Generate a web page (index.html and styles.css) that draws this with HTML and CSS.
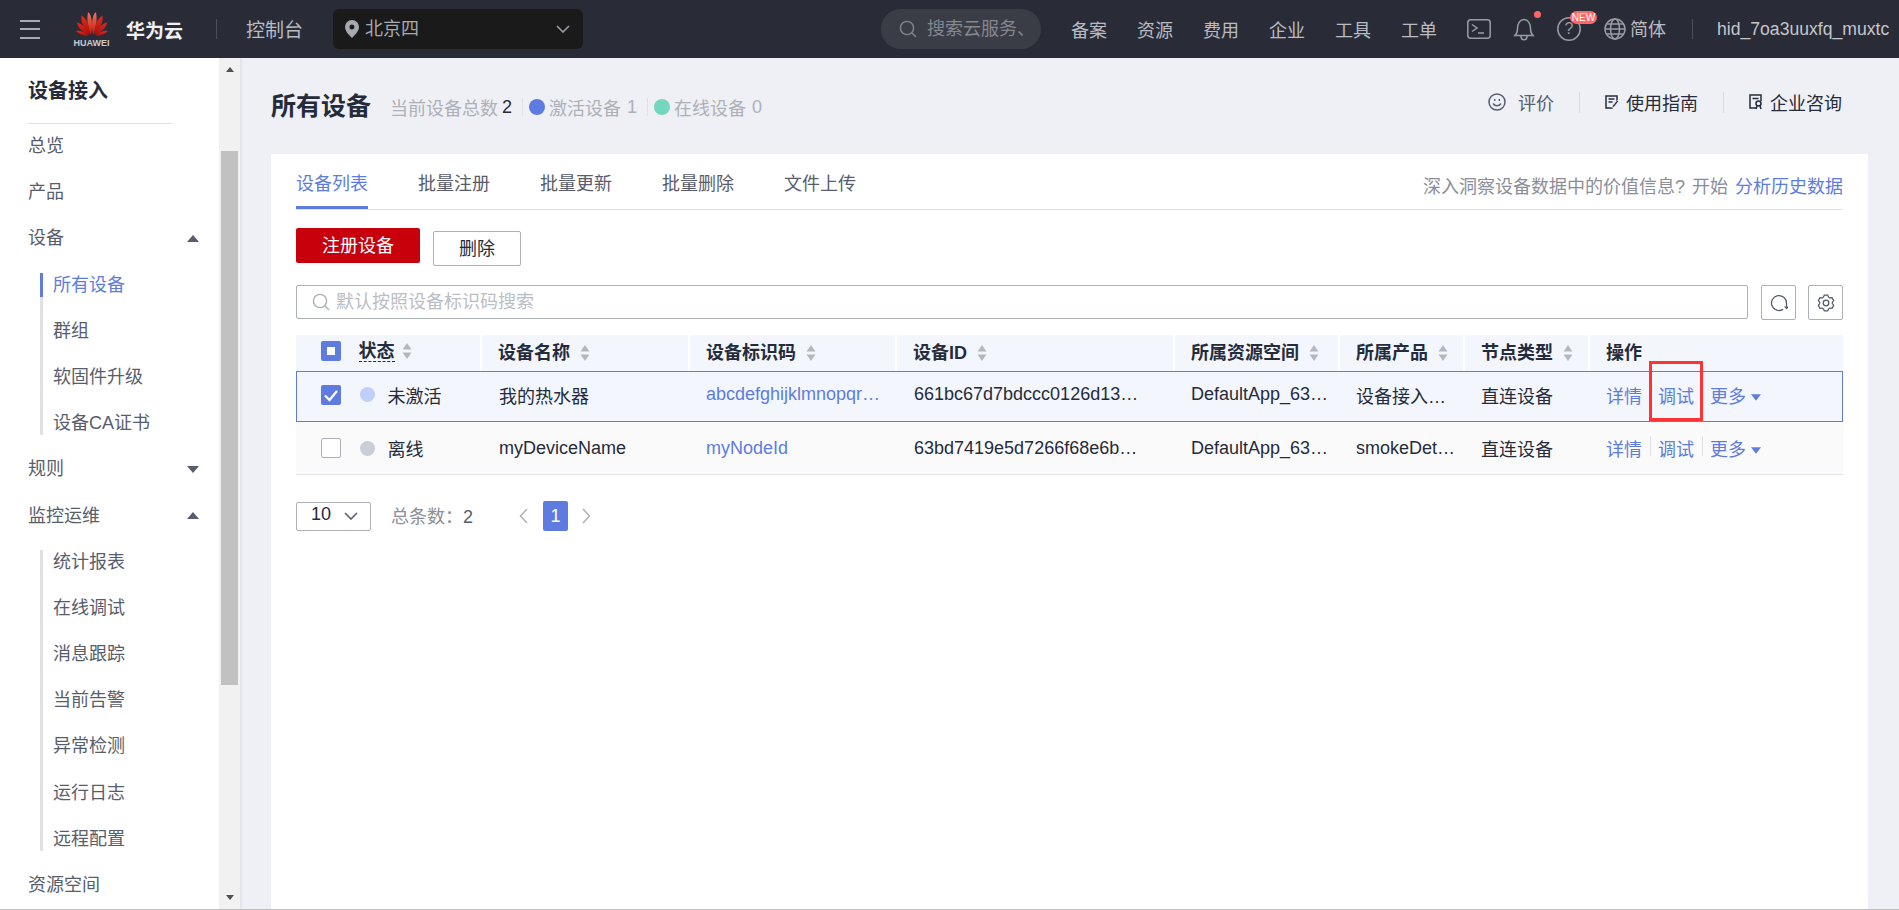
FILE: index.html
```html
<!DOCTYPE html>
<html lang="zh-CN">
<head>
<meta charset="utf-8">
<title>所有设备</title>
<link rel="stylesheet" href="styles.css">
</head>
<body>
<svg class="defs" width="0" height="0" aria-hidden="true">
  <defs>
    <linearGradient id="petal" x1="0" y1="0" x2="0" y2="1">
      <stop offset="0" stop-color="#f0775a"/>
      <stop offset="1" stop-color="#c8150f"/>
    </linearGradient>
    <linearGradient id="petalLow" x1="0" y1="0" x2="0" y2="1">
      <stop offset="0" stop-color="#e62a1c"/>
      <stop offset="1" stop-color="#a30f0d"/>
    </linearGradient>
    <symbol id="sort" viewBox="0 0 10 18">
      <path d="M5 1 9.5 7.5H.5Z"/>
      <path d="M.5 10.5h9L5 17Z"/>
    </symbol>
    <symbol id="caret" viewBox="0 0 12 8">
      <path d="M0 0h12L6 8Z"/>
    </symbol>
    <symbol id="search" viewBox="0 0 18 18">
      <circle cx="8" cy="8" r="6.6" fill="none" stroke="currentColor" stroke-width="1.4"/>
      <path d="M12.8 12.8 17 17" fill="none" stroke="currentColor" stroke-width="1.4"/>
    </symbol>
    <symbol id="chev" viewBox="0 0 14 8">
      <path d="M1 1l6 6 6-6" fill="none" stroke="currentColor" stroke-width="1.6"/>
    </symbol>
  </defs>
</svg>

<header class="topbar">
  <button class="menu-btn" aria-label="菜单"><span></span><span></span><span></span></button>
  <div class="brand">
    <div class="brand-mark">
      <svg class="logo-svg" viewBox="0 0 32 24" width="32" height="24" aria-hidden="true">
        <g fill="url(#petal)">
          <path d="M14.9 23 C11.5 15 10.5 6 12.2 0 C16 3 17 14 14.9 23Z"/>
          <path d="M17.1 23 C20.5 15 21.5 6 19.8 0 C16 3 15 14 17.1 23Z"/>
        </g>
        <g fill="url(#petalLow)">
          <path d="M13.6 23 C8 17 4.5 10 5.5 3.5 C10 6 14.5 14 13.6 23Z"/>
          <path d="M18.4 23 C24 17 27.5 10 26.5 3.5 C22 6 17.5 14 18.4 23Z"/>
          <path d="M12.6 23.3 C7 20.5 2.5 16.5 .8 10.5 C5.5 11.5 11.5 17 12.6 23.3Z"/>
          <path d="M19.4 23.3 C25 20.5 29.5 16.5 31.2 10.5 C26.5 11.5 20.5 17 19.4 23.3Z"/>
          <path d="M12 24 C8 24 3 22.5 0 18.8 C4.5 18.6 9.5 20.5 12 24Z"/>
          <path d="M20 24 C24 24 29 22.5 32 18.8 C27.5 18.6 22.5 20.5 20 24Z"/>
        </g>
      </svg>
      <span class="logo-text">HUAWEI</span>
    </div>
    <span class="brand-name">华为云</span>
  </div>
  <span class="bar-sep bar-sep-brand"></span>
  <span class="console">控制台</span>
  <div class="region">
    <svg class="pin" viewBox="0 0 14 18" width="14" height="18" aria-hidden="true">
      <path fill-rule="evenodd" d="M7 0a7 7 0 0 1 7 7c0 4-4 8-7 11-3-3-7-7-7-11a7 7 0 0 1 7-7Zm0 4.500a2.500 2.500 0 1 0 0 5 2.500 2.500 0 0 0 0-5Z"/>
    </svg>
    <span class="region-name">北京四</span>
    <svg class="region-chev"><use href="#chev"/></svg>
  </div>
  <div class="top-search">
    <svg class="top-search-icon"><use href="#search"/></svg>
    <span>搜索云服务、</span>
  </div>
  <nav class="top-nav">
    <a>备案</a><a>资源</a><a>费用</a><a>企业</a><a>工具</a><a>工单</a>
  </nav>
  <svg class="ico ico-term" viewBox="0 0 24 20" width="24" height="20" aria-hidden="true">
    <rect x=".8" y=".8" width="22.4" height="18.4" rx="3"/>
    <path d="M5 5.500 10 9 5 12.500M11 14h6"/>
  </svg>
  <div class="ico-wrap ico-wrap-bell">
    <svg class="ico" viewBox="0 0 22 24" width="22" height="24" aria-hidden="true">
      <path d="M2 18.500c2-2 2.500-3.500 2.500-7 0-5 2.500-9 6.500-9s6.500 4 6.500 9c0 3.500.5 5 2.500 7ZM8 19c0 5 6 5 6 0"/>
    </svg>
    <span class="dot-red"></span>
  </div>
  <div class="ico-wrap ico-wrap-help">
    <svg class="ico" viewBox="0 0 24 24" width="24" height="24" aria-hidden="true">
      <circle cx="12" cy="12" r="11.200"/>
    </svg>
    <span class="help-q">?</span>
    <span class="badge-new">NEW</span>
  </div>
  <svg class="ico ico-globe" viewBox="0 0 22 22" width="22" height="22" aria-hidden="true">
    <circle cx="11" cy="11" r="10"/>
    <ellipse cx="11" cy="11" rx="4.500" ry="10"/>
    <path d="M1 11h20M2.500 6h17M2.500 16h17"/>
  </svg>
  <span class="lang">简体</span>
  <span class="bar-sep bar-sep-user"></span>
  <span class="user">hid_7oa3uuxfq_muxtc</span>
</header>

<div class="layout">
  <aside class="sidebar">
    <nav class="side-nav">
      <h2 class="side-title">设备接入</h2>
      <ul class="side-list">
        <li class="side-item">总览</li>
        <li class="side-item">产品</li>
        <li class="side-item side-parent">设备<i class="tri tri-up"></i></li>
        <li>
          <ul class="side-sub">
            <li class="side-item side-active">所有设备</li>
            <li class="side-item">群组</li>
            <li class="side-item">软固件升级</li>
            <li class="side-item">设备CA证书</li>
          </ul>
        </li>
        <li class="side-item side-parent">规则<i class="tri tri-down"></i></li>
        <li class="side-item side-parent">监控运维<i class="tri tri-up"></i></li>
        <li>
          <ul class="side-sub">
            <li class="side-item">统计报表</li>
            <li class="side-item">在线调试</li>
            <li class="side-item">消息跟踪</li>
            <li class="side-item">当前告警</li>
            <li class="side-item">异常检测</li>
            <li class="side-item">运行日志</li>
            <li class="side-item">远程配置</li>
          </ul>
        </li>
        <li class="side-item">资源空间</li>
      </ul>
    </nav>
    <div class="scrollbar">
      <i class="sb-arrow sb-up"></i>
      <div class="sb-thumb"></div>
      <i class="sb-arrow sb-down"></i>
    </div>
  </aside>

  <main class="main">
    <div class="page-head">
      <h1 class="page-title">所有设备</h1>
      <div class="stats">
        <span>当前设备总数</span><b class="stat-num">2</b>
        <i class="stat-sep"></i>
        <i class="stat-dot stat-dot-blue"></i><span>激活设备</span><span class="stat-num-light">1</span>
        <i class="stat-sep"></i>
        <i class="stat-dot stat-dot-green"></i><span>在线设备</span><span class="stat-num-light">0</span>
      </div>
      <div class="head-actions">
        <a class="head-act">
          <svg class="head-ico head-ico-smile" viewBox="0 0 18 18" width="18" height="18" aria-hidden="true">
            <circle cx="9" cy="9" r="8"/>
            <path d="M5 10.500c2 3 6 3 8 0"/>
            <path class="eye" d="M6 6h1.400v2H6ZM10.600 6H12v2h-1.400Z"/>
          </svg>
          <span class="head-act-muted">评价</span>
        </a>
        <i class="head-sep"></i>
        <a class="head-act">
          <svg class="head-ico" viewBox="0 0 14 14" width="14" height="14" aria-hidden="true">
            <path d="M12 6V1H1v12h7M3.500 4h6M3.500 7h4"/>
            <path class="fillp" d="M13.500 6.500 9 12l-2 1 .5-2.200L12 5.300Z"/>
          </svg>
          <span>使用指南</span>
        </a>
        <i class="head-sep"></i>
        <a class="head-act">
          <svg class="head-ico" viewBox="0 0 14 16" width="14" height="16" aria-hidden="true">
            <path d="M7 14H1V1h11v6M3.500 4.500h6"/>
            <circle cx="9.500" cy="9.500" r="2.500"/>
            <path d="M8 12l-1 3M11 12l1 3"/>
          </svg>
          <span>企业咨询</span>
        </a>
      </div>
    </div>

    <section class="card">
      <div class="tabs">
        <a class="tab tab-active">设备列表</a>
        <a class="tab">批量注册</a>
        <a class="tab">批量更新</a>
        <a class="tab">批量删除</a>
        <a class="tab">文件上传</a>
        <p class="tabs-hint">深入洞察设备数据中的价值信息? 开始 <a class="link">分析历史数据</a></p>
      </div>

      <div class="toolbar">
        <button class="btn btn-primary">注册设备</button>
        <button class="btn btn-plain">删除</button>
      </div>

      <div class="search-row">
        <div class="search-box">
          <svg class="search-ico"><use href="#search"/></svg>
          <span>默认按照设备标识码搜索</span>
        </div>
        <button class="icon-btn" aria-label="刷新">
          <svg class="tool-ico" viewBox="0 0 18 18" width="18" height="18" aria-hidden="true">
            <path d="M13 15.400A7.500 7.500 0 1 1 16.500 9v5"/>
            <path class="tool-solid" d="M14 12.500h5L16.500 15.500Z"/>
          </svg>
        </button>
        <button class="icon-btn" aria-label="设置">
          <svg class="tool-ico" viewBox="0 0 18 18" width="18" height="18" aria-hidden="true">
            <circle cx="9" cy="9" r="2.800"/>
            <path id="tooth" d="M6 3.800 7.340 1.170H10.660L12 3.800"/>
            <use href="#tooth" transform="rotate(60 9 9)"/>
            <use href="#tooth" transform="rotate(120 9 9)"/>
            <use href="#tooth" transform="rotate(180 9 9)"/>
            <use href="#tooth" transform="rotate(240 9 9)"/>
            <use href="#tooth" transform="rotate(300 9 9)"/>
          </svg>
        </button>
      </div>

      <table class="grid">
        <colgroup>
          <col class="c-status"><col class="c-name"><col class="c-code"><col class="c-id">
          <col class="c-space"><col class="c-prod"><col class="c-node"><col class="c-op">
        </colgroup>
        <thead>
          <tr>
            <th class="cell-first">
              <span class="check check-partial"><i></i></span>
              <span class="status-head">状态</span>
              <svg class="sort sort-tight"><use href="#sort"/></svg>
            </th>
            <th>设备名称<svg class="sort"><use href="#sort"/></svg></th>
            <th>设备标识码<svg class="sort"><use href="#sort"/></svg></th>
            <th>设备ID<svg class="sort"><use href="#sort"/></svg></th>
            <th>所属资源空间<svg class="sort"><use href="#sort"/></svg></th>
            <th>所属产品<svg class="sort"><use href="#sort"/></svg></th>
            <th>节点类型<svg class="sort"><use href="#sort"/></svg></th>
            <th>操作</th>
          </tr>
        </thead>
        <tbody>
          <tr class="row-selected">
            <td class="cell-first">
              <span class="check check-on">
                <svg viewBox="0 0 20 20" width="20" height="20" aria-hidden="true"><path d="M4 10.500 8.500 15 16 6"/></svg>
              </span>
              <i class="state-dot state-inactive"></i>
              <span>未激活</span>
            </td>
            <td class="cell-nudge">我的热水器</td>
            <td><a class="link">abcdefghijklmnopqr…</a></td>
            <td class="cell-nudge">661bc67d7bdccc0126d13…</td>
            <td>DefaultApp_63…</td>
            <td>设备接入…</td>
            <td>直连设备</td>
            <td>
              <div class="ops">
                <a class="link">详情</a>
                <a class="link op-mark">调试<span class="red-box"></span></a>
                <a class="link">更多<svg class="op-caret"><use href="#caret"/></svg></a>
              </div>
            </td>
          </tr>
          <tr class="row-plain">
            <td class="cell-first">
              <span class="check"></span>
              <i class="state-dot state-offline"></i>
              <span>离线</span>
            </td>
            <td class="cell-nudge">myDeviceName</td>
            <td><a class="link">myNodeId</a></td>
            <td class="cell-nudge">63bd7419e5d7266f68e6b…</td>
            <td>DefaultApp_63…</td>
            <td>smokeDet…</td>
            <td>直连设备</td>
            <td>
              <div class="ops ops-sep">
                <a class="link">详情</a>
                <a class="link">调试</a>
                <a class="link">更多<svg class="op-caret"><use href="#caret"/></svg></a>
              </div>
            </td>
          </tr>
        </tbody>
      </table>

      <div class="pager">
        <div class="page-size"><span>10</span><svg class="page-size-chev"><use href="#chev"/></svg></div>
        <span class="page-total">总条数：<span>2</span></span>
        <svg class="page-arrow" viewBox="0 0 9 16" width="9" height="16" aria-hidden="true"><path d="M8 1 1.500 8 8 15"/></svg>
        <span class="page-cur">1</span>
        <svg class="page-arrow" viewBox="0 0 9 16" width="9" height="16" aria-hidden="true"><path d="M1 1l6.500 7L1 15"/></svg>
      </div>
    </section>
  </main>
</div>
<div class="window-edge"></div>
</body>
</html>
```
FILE: styles.css
```css
* { box-sizing: border-box; }
html, body { margin: 0; padding: 0; height: 100%; }
body {
  overflow: hidden;
  background: #eff0f5;
  color: #252b3a;
  font-family: "Liberation Sans", "Noto Sans CJK SC", sans-serif;
  font-size: 18px;
}
ul { list-style: none; margin: 0; padding: 0; }
h1, h2, p { margin: 0; }
i { display: block; font-style: normal; }
button { font: inherit; cursor: pointer; }
.defs { position: absolute; }
.window-edge { height: 1px; background: #bdbdbd; }

/* Top bar */
.topbar {
  display: flex;
  align-items: center;
  height: 58px;
  background: #292c36;
  color: #b9bbc3;
}
.menu-btn {
  display: flex;
  flex-direction: column;
  justify-content: space-between;
  width: 20px;
  height: 19px;
  margin-left: 20px;
  padding: 0;
  border: 0;
  background: none;
}
.menu-btn span { display: block; height: 2px; background: #a9abb4; }
.brand { display: flex; align-items: center; margin-left: 35px; }
.brand-mark { display: flex; flex-direction: column; align-items: center; width: 33px; margin-top: 3px; }
.logo-svg { display: block; }
.logo-text { font-size: 9px; line-height: 11px; margin-top: 2px; font-weight: 700; color: #c9cbd1; }
.brand-name { margin-left: 18px; font-size: 19px; font-weight: 700; color: #f0f0f2; }
.bar-sep { display: block; width: 1px; height: 20px; background: #4c4f59; }
.bar-sep-brand { margin-left: 33px; }
.bar-sep-user { margin-left: 26px; }
.console { margin-left: 29px; margin-bottom: 2px; font-size: 19px; color: #b9bbc3; }
.region {
  display: flex;
  align-items: center;
  width: 250px;
  height: 40px;
  margin-left: 30px;
  padding: 0 12px;
  border-radius: 6px;
  background: #1a1a1a;
}
.pin { fill: #a7a9b1; flex: none; }
.region-name { margin: 0 0 4px 6px; color: #a7a9b1; }
.region-chev { width: 14px; height: 8px; margin-left: auto; margin-right: 1px; color: #9a9ca4; }
.top-search {
  display: flex;
  align-items: center;
  width: 160px;
  height: 40px;
  margin-left: 298px;
  padding-left: 18px;
  border-radius: 20px;
  background: #3a3d46;
  color: #85878f;
}
.top-search-icon { width: 18px; height: 18px; flex: none; margin-right: 10px; }
.top-search span { margin-bottom: 4px; white-space: nowrap; }
.top-nav { display: flex; gap: 30px; margin-left: 30px; }
.ico { display: block; fill: none; stroke: #9a9ca5; stroke-width: 1.5; flex: none; }
.ico-term { margin-left: 30px; }
.ico-wrap { position: relative; flex: none; }
.ico-wrap-bell { margin-left: 22px; }
.ico-wrap-help { margin-left: 22px; }
.dot-red {
  position: absolute;
  top: -6px;
  right: -6px;
  width: 7px;
  height: 7px;
  border-radius: 50%;
  background: #f66;
}
.help-q {
  position: absolute;
  inset: 0;
  text-align: center;
  line-height: 24px;
  font-size: 16px;
  color: #9a9ca5;
}
.badge-new {
  position: absolute;
  top: -6px;
  left: 13px;
  width: 27px;
  height: 13px;
  border-radius: 7px;
  background: #f66;
  color: #fff;
  font-size: 10px;
  line-height: 13px;
  text-align: center;
}
.ico-globe { margin-left: 23px; }
.lang { margin-left: 4px; margin-bottom: 2px; }
.user { margin-left: 24px; white-space: nowrap; font-size: 17.6px; color: #c4c6cd; }

/* Layout */
.layout { display: flex; height: 851px; overflow: hidden; }
.sidebar {
  display: flex;
  flex: none;
  width: 240px;
  height: 100%;
  box-shadow: 1px 0 3px rgba(0, 0, 0, .08);
}
.side-nav { width: 219px; background: #fff; overflow: hidden; }
.side-title {
  height: 66px;
  margin: 0 47px 0 28px;
  padding-top: 21px;
  border-bottom: 1px solid #dfe1e6;
  font-size: 20px;
  line-height: 24px;
  font-weight: 700;
}
.side-list { display: flex; flex-direction: column; gap: 22.2px; padding: 10px 0 0 28px; color: #575d6c; }
.side-item { height: 24px; line-height: 24px; white-space: nowrap; }
.side-parent { display: flex; align-items: center; justify-content: space-between; padding-right: 20px; }
.tri { width: 0; height: 0; border-left: 6px solid transparent; border-right: 6px solid transparent; }
.tri-up { border-bottom: 7px solid #575d6c; }
.tri-down { border-top: 7px solid #575d6c; }
.side-sub {
  display: flex;
  flex-direction: column;
  gap: 22.2px;
  margin-left: 12px;
  padding-left: 10px;
  border-left: 3px solid #dfe1e6;
}
.side-active { margin-left: -13px; padding-left: 10px; border-left: 3px solid #5e7ce0; color: #5e7ce0; }
.scrollbar {
  display: flex;
  flex-direction: column;
  align-items: center;
  width: 21px;
  background: #f1f1f1;
}
.sb-arrow { width: 0; height: 0; border-left: 4px solid transparent; border-right: 4px solid transparent; }
.sb-up { margin-top: 9px; border-bottom: 5px solid #505050; }
.sb-down { margin-top: auto; margin-bottom: 9px; border-top: 5px solid #505050; }
.sb-thumb { width: 17px; height: 534px; margin-top: 79px; background: #c1c1c1; }

/* Main */
.main { flex: 1; min-width: 0; padding-left: 31px; padding-right: 31px; }
.page-head { display: flex; align-items: center; height: 96px; }
.page-title { font-size: 25px; line-height: 30px; font-weight: 700; }
.stats { display: flex; align-items: center; margin: 2px 0 0 19px; color: #adb0b8; white-space: nowrap; }
.stat-num { margin-left: 4px; font-weight: 400; color: #252b3a; }
.stat-num-light { margin-left: 6px; }
.stat-sep { width: 1px; height: 18px; margin: 0 6px 0 10px; background: #dfe1e6; }
.stat-dot { width: 16px; height: 16px; margin-right: 4px; border-radius: 50%; }
.stat-dot-blue { background: #5e7ce0; }
.stat-dot-green { background: #73d7be; }
.head-actions { display: flex; align-items: center; margin: 0 26px 8px auto; color: #252b3a; }
.head-act { display: flex; align-items: center; gap: 7px; }
.head-act-muted { margin-left: 5px; color: #575d6c; }
.head-ico { fill: none; stroke: #252b3a; stroke-width: 1.5; flex: none; }
.head-ico-smile { stroke: #575d6c; }
.eye { fill: #575d6c; stroke: none; }
.fillp { fill: #252b3a; stroke: #fff; stroke-width: .6; }
.head-sep { width: 1px; height: 21px; margin: 0 25px; background: #d8dae0; }

.card { height: 755px; padding: 0 25px; background: #fff; }
.tabs { display: flex; align-items: flex-start; height: 56px; border-bottom: 1px solid #dfe1e6; }
.tab {
  height: 55px;
  margin-right: 50px;
  padding-top: 18px;
  line-height: 24px;
  color: #575d6c;
  white-space: nowrap;
}
.tab-active { border-bottom: 3px solid #5e7ce0; color: #5e7ce0; }
.tabs-hint { margin-left: auto; padding-top: 21px; line-height: 24px; color: #8a8e99; white-space: nowrap; word-spacing: 2px; }
.link { color: #5e7ce0; }

.toolbar { display: flex; align-items: flex-start; gap: 13px; margin-top: 18px; }
.btn { height: 35px; padding: 0 0 3px; border-radius: 2px; }
.btn-primary { width: 124px; border: 0; background: #c7000b; color: #fff; }
.btn-plain { width: 88px; margin-top: 3px; border: 1px solid #adb0b8; background: #fff; color: #252b3a; }

.search-row { display: flex; align-items: flex-start; gap: 12px; margin-top: 19px; }
.search-box {
  display: flex;
  align-items: center;
  flex: 1;
  height: 34px;
  margin-right: 1px;
  padding-left: 15px;
  border: 1px solid #adb0b8;
  border-radius: 2px;
  color: #bbbec5;
}
.search-box span { margin-bottom: 5px; }
.search-ico { width: 18px; height: 18px; margin-right: 6px; color: #adb0b8; }
.icon-btn {
  display: flex;
  align-items: center;
  justify-content: center;
  width: 35px;
  height: 35px;
  padding: 0;
  border: 1px solid #adb0b8;
  border-radius: 2px;
  background: #fff;
}
.tool-ico { fill: none; stroke: #575d6c; stroke-width: 1.3; }
.tool-solid { fill: #575d6c; stroke: none; }

/* Table */
.grid {
  width: 100%;
  margin-top: 15px;
  border-collapse: separate;
  border-spacing: 0;
  table-layout: fixed;
}
.c-status { width: 184px; }
.c-name { width: 208px; }
.c-code { width: 207px; }
.c-id { width: 278px; }
.c-space { width: 165px; }
.c-prod { width: 125px; }
.c-node { width: 125px; }
.c-op { width: 255px; }
th {
  height: 36px;
  padding: 0 0 4px 16px;
  border-left: 2px solid #fff;
  background: #f3f6fd;
  text-align: left;
  font-weight: 700;
  white-space: nowrap;
}
th:first-child { border-left: 0; }
.sort { display: inline-block; width: 10px; height: 18px; margin-left: 10px; fill: #b4b7bf; vertical-align: -3px; }
.sort-tight { margin-left: 2px; }
td { padding: 0 0 0 18px; white-space: nowrap; overflow: visible; }
td.cell-nudge { padding-left: 19px; }
th.cell-first, .cell-first { padding-left: 25px; }
.cell-first > * { vertical-align: middle; }
.check {
  display: inline-block;
  width: 20px;
  height: 20px;
  margin-right: 12.5px;
  border: 1px solid #adb0b8;
  border-radius: 2px;
  background: #fff;
}
.check-partial { display: inline-flex; align-items: center; justify-content: center; border: 0; background: #5e7ce0; }
.check-partial i { width: 8px; height: 8px; background: #fff; }
.check-on { border: 0; background: #5e7ce0; }
.check-on svg { display: block; fill: none; stroke: #fff; stroke-width: 2.2; }
.status-head { border-bottom: 1px dashed #252b3a; line-height: 22px; }
.state-dot { display: inline-block; width: 15px; height: 15px; margin-right: 8px; border-radius: 50%; margin-left: 1px; }
.state-inactive { background: #bfcffa; }
.state-offline { background: #c9ced9; }
.row-selected td {
  height: 51px;
  padding-bottom: 4px;
  border-top: 1px solid #5e7ce0;
  border-bottom: 1px solid #5e7ce0;
  background: #f3f6fd;
}
.row-selected td:first-child { border-left: 1px solid #5e7ce0; padding-left: 24px; }
.row-selected td:last-child { border-right: 1px solid #5e7ce0; }
.row-plain td { height: 53px; padding-bottom: 0; border-bottom: 1px solid #dfe1e6; background: #fafafa; }
.ops { display: flex; gap: 16px; }
.ops-sep a + a { position: relative; }
.ops-sep a + a::before {
  content: "";
  position: absolute;
  left: -8px;
  top: 1px;
  width: 1px;
  height: 20px;
  background: #dfe1e6;
}
.op-mark { position: relative; }
.red-box {
  position: absolute;
  left: -9px;
  top: -21px;
  width: 54px;
  height: 60px;
  border: 3px solid #f33;
  pointer-events: none;
}
.op-caret { width: 10px; height: 7px; margin-left: 5px; fill: #5e7ce0; vertical-align: 2px; }

/* Pagination */
.pager { display: flex; align-items: center; margin-top: 26px; height: 30px; }
.pager > .page-total, .page-size span { margin-bottom: 3px; }
.page-size {
  display: flex;
  align-items: center;
  justify-content: space-between;
  width: 75px;
  height: 29px;
  padding: 0 12px 0 14px;
  border: 1px solid #adb0b8;
  border-radius: 2px;
}
.page-size-chev { width: 14px; height: 8px; color: #575d6c; }
.page-total { margin-left: 20px; color: #8a8e99; white-space: nowrap; }
.page-total span { color: #575d6c; }
.page-arrow { display: block; fill: none; stroke: #adb0b8; stroke-width: 1.5; flex: none; }
.page-total + .page-arrow { margin-left: 46px; }
.page-cur {
  width: 25px;
  height: 30px;
  margin: 0 14px 0 15px;
  border-radius: 2px;
  background: #5e7ce0;
  color: #fff;
  line-height: 30px;
  text-align: center;
}
```
